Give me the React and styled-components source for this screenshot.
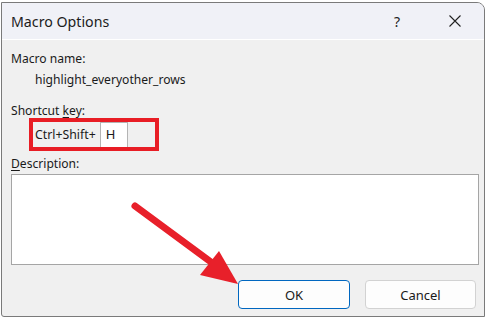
import React from 'react';
import styled, { createGlobalStyle } from 'styled-components';

const GlobalStyle = createGlobalStyle`
  html, body {
    margin: 0;
    padding: 0;
    background: #ffffff;
  }
  body {
    font-family: "Segoe UI", "Noto Sans", "Liberation Sans", sans-serif;
    color: #1a1a1a;
  }
`;

const Window = styled.div`
  position: relative;
  box-sizing: border-box;
  margin: 2px 0 0 1px;
  width: 484px;
  height: 315px;
  border: 1px solid #7a7a7a;
  border-top-right-radius: 8px;
  border-bottom-left-radius: 3px;
  background: #f0f0f0;
  overflow: hidden;
  display: flex;
  flex-direction: column;
`;

const TitleBar = styled.div`
  height: 36px;
  flex: none;
  background: #f0f1f7;
  border-bottom: 1px solid #ffffff;
  display: flex;
  align-items: center;
  padding-left: 9px;
`;

const Title = styled.div`
  flex: 1;
  font-size: 14.2px;
  color: #1c1c1c;
`;

const TitleButton = styled.div`
  width: 58px;
  display: flex;
  justify-content: center;
  align-items: center;
  font-size: 14px;
  color: #222;
`;

const Body = styled.div`
  flex: 1;
  display: flex;
  flex-direction: column;
  padding: 10px 0 0 9px;
  font-size: 12.1px;
`;

const Label = styled.div`
  line-height: 17px;
  margin-top: ${p => p.$mt || 0}px;
`;

const Value = styled.div`
  line-height: 17px;
  margin: 4px 0 0 24px;
`;

const Under = styled.span`
  text-decoration: underline;
  text-underline-offset: 2px;
`;

const ShortcutBox = styled.div`
  box-sizing: border-box;
  margin: -1px 0 0 18px;
  width: 130px;
  height: 33px;
  border: 4px solid #e81d25;
  display: flex;
  align-items: flex-end;
  padding-left: 2px;
`;

const KeyText = styled.span`
  line-height: 25px;
  font-size: 12.3px;
`;

const KeyInput = styled.div`
  box-sizing: border-box;
  margin-left: 4px;
  width: 28px;
  height: 25px;
  background: #fff;
  border: 1px solid #b4b4b4;
  border-bottom: none;
  padding-left: 5px;
  line-height: 23px;
  font-size: 13px;
`;

const TextArea = styled.div`
  box-sizing: border-box;
  margin-top: 2px;
  width: 468px;
  height: 91px;
  background: #fff;
  border: 1px solid #a5a5a5;
`;

const Buttons = styled.div`
  display: flex;
  gap: 15px;
  margin: 15px 0 0 227px;
`;

const Button = styled.div`
  box-sizing: border-box;
  width: ${p => p.$w}px;
  height: 29px;
  border-radius: 4px;
  background: #fdfdfd;
  border: 1px solid ${p => (p.$primary ? '#0067c0' : '#d2d2d2')};
  display: flex;
  align-items: center;
  justify-content: center;
  font-size: 13px;
  color: #1a1a1a;
`;

const Arrow = styled.svg`
  position: absolute;
  left: -2px;
  top: -3px;
  pointer-events: none;
`;

export default function App() {
  return (
    <>
      <GlobalStyle />
      <Window>
        <TitleBar>
          <Title>Macro Options</Title>
          <TitleButton>?</TitleButton>
          <TitleButton>
            <svg width="14" height="14" viewBox="0 0 14 14">
              <path d="M1.5 1.5 L12.5 12.5 M12.5 1.5 L1.5 12.5" stroke="#222" strokeWidth="1.1" />
            </svg>
          </TitleButton>
        </TitleBar>
        <Body>
          <Label>Macro name:</Label>
          <Value>highlight_everyother_rows</Value>
          <Label $mt={14}>Shortcut <Under>k</Under>ey:</Label>
          <ShortcutBox>
            <KeyText>Ctrl+Shift+</KeyText>
            <KeyInput>H</KeyInput>
          </ShortcutBox>
          <Label $mt={4}><Under>D</Under>escription:</Label>
          <TextArea />
          <Buttons>
            <Button $w={112} $primary>OK</Button>
            <Button $w={111}>Cancel</Button>
          </Buttons>
        </Body>
        <Arrow width="486" height="319" viewBox="0 0 486 319">
          <line x1="135" y1="206" x2="215" y2="265" stroke="#e8202a" strokeWidth="7" strokeLinecap="round" />
          <polygon points="238,284 200,275 219,251" fill="#e8202a" />
        </Arrow>
      </Window>
    </>
  );
}
